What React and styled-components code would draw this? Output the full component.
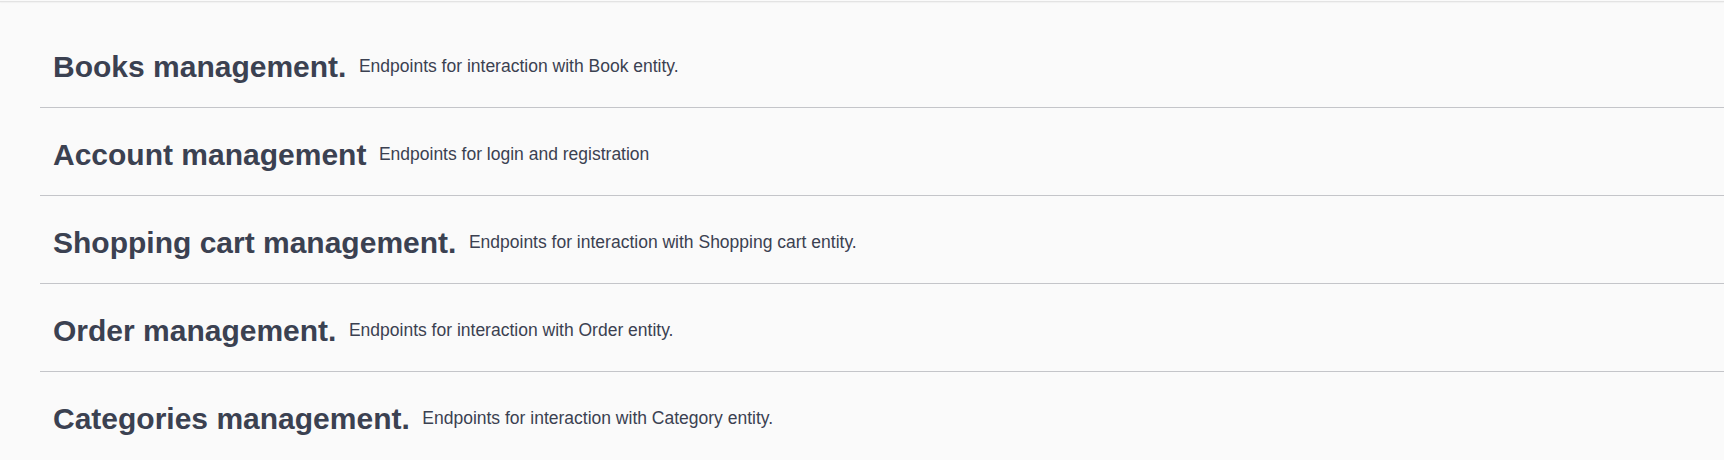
import styled, { createGlobalStyle } from "styled-components";

const GlobalStyle = createGlobalStyle`
  body {
    margin: 0;
    background: #fafafa;
    font-family: "Liberation Sans", Arial, sans-serif;
    color: #3b4151;
  }
`;

const tags = [
  { name: "Books management.", desc: "Endpoints for interaction with Book entity." },
  { name: "Account management", desc: "Endpoints for login and registration" },
  { name: "Shopping cart management.", desc: "Endpoints for interaction with Shopping cart entity." },
  { name: "Order management.", desc: "Endpoints for interaction with Order entity." },
  { name: "Categories management.", desc: "Endpoints for interaction with Category entity." },
];

function App() {
  return (
    <Page>
      <GlobalStyle />
      <TopRule />
      <TagList>
        {tags.map((tag) => (
          <TagRow key={tag.name}>
            <TagName>{tag.name}</TagName>
            <TagDesc>{tag.desc}</TagDesc>
          </TagRow>
        ))}
      </TagList>
    </Page>
  );
}

const Page = styled.div`
  height: 459px;
  overflow: hidden;
  padding-top: 1px;
  box-sizing: border-box;
`;

const TopRule = styled.div`
  height: 1px;
  background: #e3e3e3;
  box-shadow: 0 1px 1px rgba(0, 0, 0, 0.04);
`;

const TagList = styled.div`
  display: flex;
  flex-direction: column;
  padding: 24px 0 0 40px;
`;

const TagRow = styled.h3`
  display: flex;
  align-items: center;
  height: 81px;
  margin: 0 0 6px;
  padding: 0 25px 0 13px;
  border-bottom: 1px solid #c4c5c9;
  cursor: pointer;
`;

const TagName = styled.span`
  font-size: 30px;
  font-weight: 700;
  color: #3b4151;
`;

const TagDesc = styled.small`
  flex: 1;
  padding: 0 12.5px;
  margin-top: -1px;
  font-size: 17.5px;
  font-weight: 400;
  color: #3b4151;
`;

export default App;
